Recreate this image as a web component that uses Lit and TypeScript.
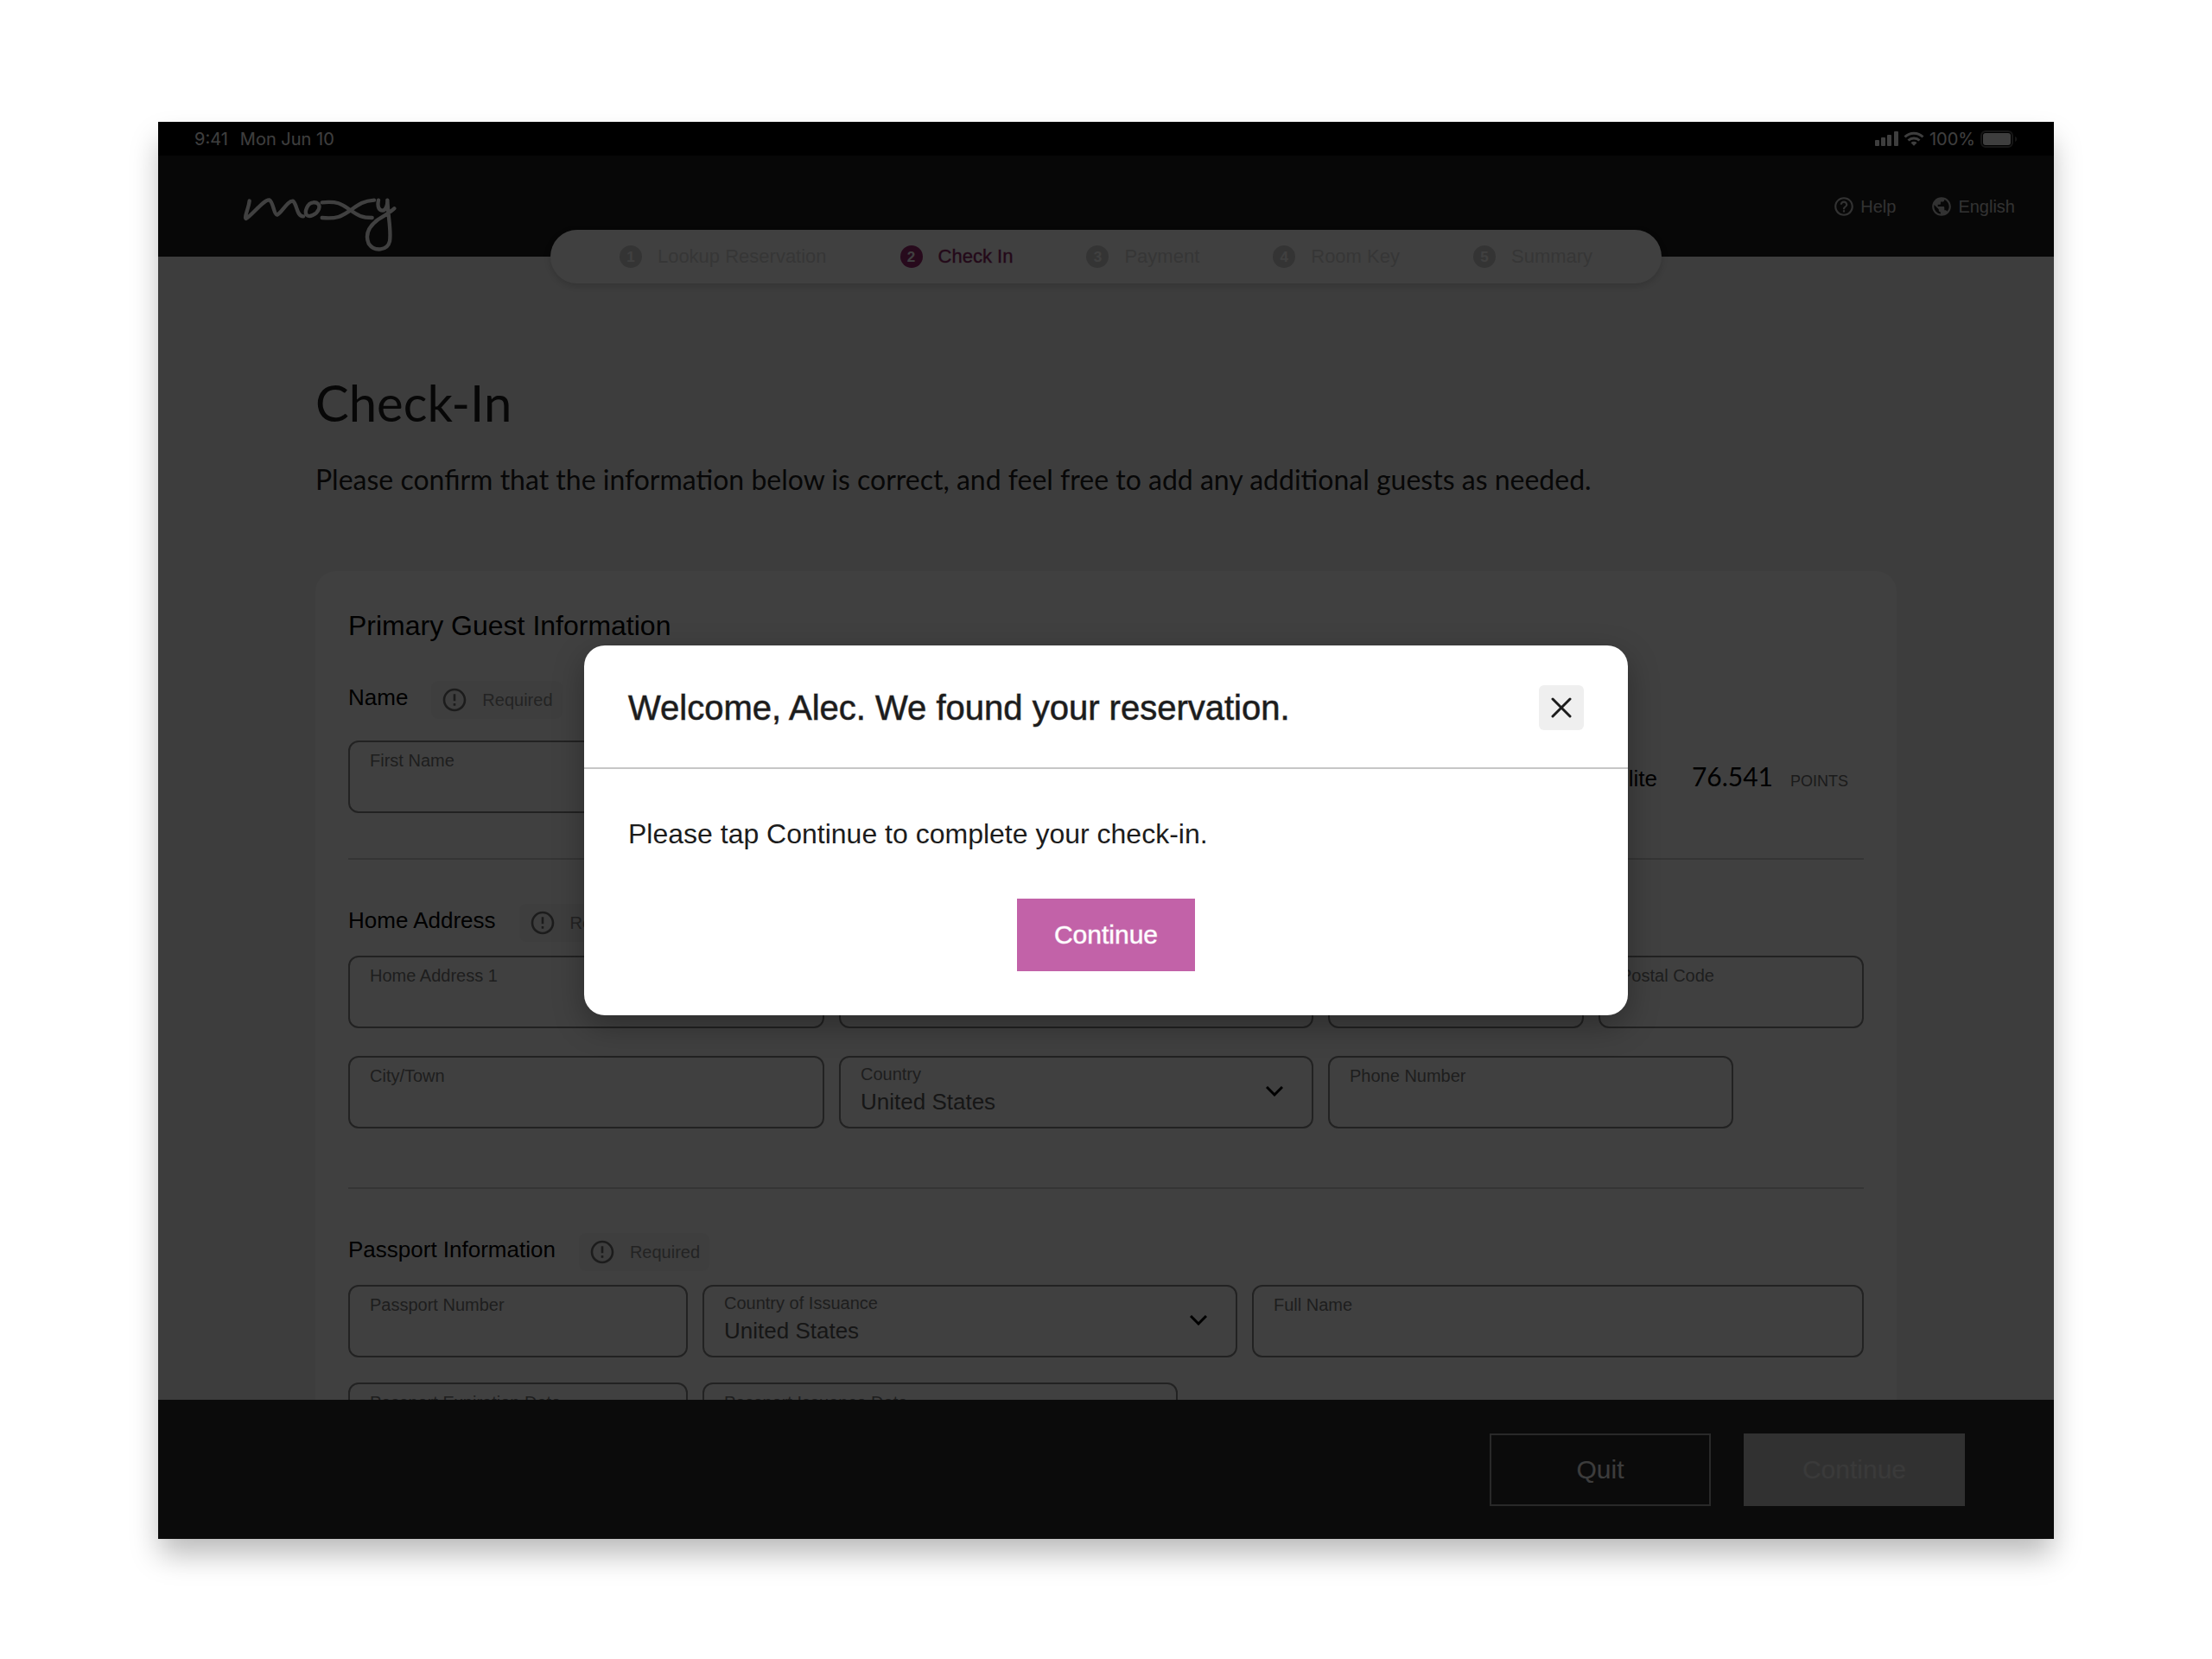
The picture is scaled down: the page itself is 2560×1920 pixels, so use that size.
import { LitElement, html, css, svg, nothing } from "lit";
import { customElement, property } from "lit/decorators.js";
import { classMap } from "lit/directives/class-map.js";

const CIRCLE_RING =
  "M12 2C6.48 2 2 6.48 2 12s4.48 10 10 10 10-4.48 10-10S17.52 2 12 2zm0 18c-4.41 0-8-3.59-8-8s3.59-8 8-8 8 3.59 8 8-3.59 8-8 8z";
const HELP = svg`<path d="${CIRCLE_RING}M11 16h2v2h-2zM12 6c-2.21 0-4 1.79-4 4h2c0-1.1.9-2 2-2s2 .9 2 2c0 2-3 1.75-3 5h2c0-2.25 3-2.5 3-5 0-2.21-1.79-4-4-4z"/>`;
const GLOBE = svg`<path d="M12 2C6.48 2 2 6.48 2 12s4.48 10 10 10 10-4.48 10-10S17.52 2 12 2zm-1 17.93c-3.95-.49-7-3.85-7-7.93 0-.62.08-1.21.21-1.79L9 15v1c0 1.1.9 2 2 2v1.93zm6.9-2.54c-.26-.81-1-1.39-1.9-1.39h-1v-3c0-.55-.45-1-1-1H8v-2h2c.55 0 1-.45 1-1V7h2c1.1 0 2-.9 2-2v-.41c2.93 1.19 5 4.06 5 7.41 0 2.08-.8 3.97-2.1 5.39z"/>`;

const STEPS = ["Lookup Reservation", "Check In", "Payment", "Room Key", "Summary"];
const ACTIVE_STEP = 1;

/** A bordered box with a small caption above an input or a drop-down. */
@customElement("form-field")
export class FormField extends LitElement {
  @property() label = "";
  @property() value = "";
  @property({ type: Boolean }) choice = false;

  static styles = css`
    :host {
      display: block;
      min-width: 0;
    }
    .box {
      box-sizing: border-box;
      display: grid;
      grid-template-columns: 1fr auto;
      grid-template-rows: 24px 40px;
      align-content: start;
      height: 84px;
      padding: 9px 33px 0 23px;
      border: 2px solid #868686;
      border-radius: 12px;
    }
    .box.choice {
      padding-top: 7px;
    }
    label {
      font-size: 20px;
      line-height: 24px;
      white-space: nowrap;
      color: #787878;
    }
    input,
    select {
      grid-column: 1;
      grid-row: 2;
      min-width: 0;
      width: 100%;
      height: 40px;
      margin: 0;
      padding: 0;
      border: 0;
      outline: 0;
      appearance: none;
      background: none;
      font: inherit;
      font-size: 26px;
      color: #5a5a5a;
    }
    svg {
      grid-column: 2;
      grid-row: 1 / 3;
      align-self: center;
    }
  `;

  render() {
    return html`<div class=${classMap({ box: true, choice: this.choice })}>
      <label for="control">${this.label}</label>
      ${this.choice
        ? html`<select id="control"><option>${this.value}</option></select>
            <svg width="20" height="12" viewBox="0 0 20 12" fill="none" stroke="#000" stroke-width="3" aria-hidden="true">
              <path d="M1 1l9 9 9-9" />
            </svg>`
        : html`<input id="control" type="text" .value=${this.value} />`}
    </div>`;
  }
}

@customElement("app-root")
export class AppRoot extends LitElement {
  static styles = css`
    :host {
      display: block;
      box-sizing: border-box;
      height: 100vh;
      padding: 141px 183px 139px;
      background: #fff;
      font-family: "Liberation Sans", Arial, sans-serif;
    }
    h1, h2, h3, p, ol {
      margin: 0;
      padding: 0;
      font-weight: 400;
    }
    button {
      font: inherit;
      cursor: pointer;
    }
    .device {
      position: relative;
      height: 100%;
      box-shadow: 0 20px 32px -2px rgba(0, 0, 0, 0.27);
    }
    .page {
      display: flex;
      flex-direction: column;
      height: 100%;
      background: #f2f2f2;
    }

    /* status bar */
    .status {
      display: flex;
      align-items: center;
      justify-content: space-between;
      height: 39px;
      padding: 0 42px;
      background: #000;
      color: #f8f8f8;
      font-family: Inter, sans-serif;
      font-size: 20px;
    }
    .status-group {
      display: flex;
      align-items: center;
      gap: 14px;
    }
    .status-group.right {
      gap: 6px;
    }

    /* brand bar */
    .brand {
      position: relative;
      display: flex;
      justify-content: space-between;
      align-items: flex-start;
      height: 117px;
      padding: 46px 45px 0 96px;
      box-sizing: border-box;
      background: #1c1c1c;
    }
    .links {
      display: flex;
      gap: 40px;
    }
    .links a {
      display: flex;
      align-items: center;
      gap: 6px;
      font-size: 20px;
      line-height: 24px;
      color: #c8c8c8;
      text-decoration: none;
    }
    .steps-bar {
      position: absolute;
      left: 0;
      right: 0;
      bottom: -31px;
      display: flex;
      justify-content: center;
    }
    .steps {
      display: flex;
      align-items: center;
      gap: 85px;
      height: 62px;
      padding: 0 80px;
      border-radius: 31px;
      background: #fff;
      box-shadow: 0 3px 8px rgba(0, 0, 0, 0.16);
      list-style: none;
    }
    .step {
      display: flex;
      align-items: center;
      gap: 18px;
      font-size: 22px;
      line-height: 28px;
      color: #d6d6d6;
    }
    .dot {
      display: grid;
      place-items: center;
      width: 26px;
      height: 26px;
      border-radius: 50%;
      background: #cecece;
      color: #fff;
      font-size: 17px;
      font-weight: 700;
    }
    .step.active {
      color: #8c2464;
      -webkit-text-stroke: 1px rgba(140, 36, 100, 0.4);
    }
    .active .dot {
      background: #9c2870;
      -webkit-text-stroke: 0;
    }

    /* content */
    .content {
      flex: 1;
      min-height: 0;
      overflow: hidden;
      padding: 133px 182px 0;
    }
    .title {
      font-family: Lato, sans-serif;
      font-size: 58px;
      line-height: 72px;
      color: #1c1c1c;
    }
    .lead {
      margin-top: 33px;
      font-family: Lato, sans-serif;
      font-size: 32px;
      line-height: 40px;
      color: #1c1c1c;
    }
    .card {
      margin-top: 86px;
      padding: 43px 38px;
      border-radius: 24px;
      background: #fefefe;
    }
    .card-title {
      font-size: 32px;
      line-height: 40px;
      margin-bottom: 44px;
    }
    .section-head {
      display: flex;
      align-items: center;
      gap: 27px;
      margin-bottom: 16px;
    }
    .section-head.roomy {
      margin-bottom: 25px;
    }
    .section-title {
      padding-bottom: 7px;
      font-size: 26px;
      line-height: 32px;
    }
    .badge {
      display: flex;
      align-items: center;
      gap: 16px;
      height: 44px;
      padding: 0 11px;
      border-radius: 8px;
      background: #f7f7f7;
      font-size: 20px;
      color: #8c8c8c;
    }
    .badge svg {
      fill: #707070;
    }
    .row {
      display: grid;
      gap: 17px;
      align-items: center;
    }
    .row + .row {
      margin-top: 32px;
    }
    .row.passport + .row {
      margin-top: 29px;
    }
    .names {
      grid-template-columns: 551fr 549fr 620fr;
    }
    .address {
      grid-template-columns: 551fr 549fr 296fr 307fr;
    }
    .city {
      grid-template-columns: 551fr 549fr 469fr 134fr;
    }
    .passport {
      grid-template-columns: 393fr 619fr 708fr;
    }
    .dates {
      grid-template-columns: 393fr 550fr 777fr;
    }
    .member {
      display: flex;
      justify-content: flex-end;
      align-items: baseline;
      padding: 0 18px 2px 0;
      white-space: nowrap;
    }
    .tier {
      font-size: 26px;
    }
    .points {
      margin: 0 20px 0 40px;
      font-family: Lato, sans-serif;
      font-size: 30px;
    }
    .unit {
      font-size: 18px;
      color: #6c6c6c;
    }
    .rule {
      height: 2px;
      margin: 52px 0 51px;
      border: 0;
      background: #d4d4d4;
    }
    .rule.far {
      margin-top: 68px;
    }

    /* footer */
    .footer {
      display: flex;
      align-items: center;
      justify-content: flex-end;
      gap: 38px;
      height: 161px;
      padding: 0 103px;
      background: #2c2c2c;
    }
    .action {
      width: 256px;
      height: 84px;
      padding: 0;
      border: 2px solid #a4a4a4;
      background: none;
      color: #f0f0f0;
      font-size: 30px;
    }
    .action.muted {
      border-color: #c4c4c4;
      background: #c4c4c4;
      color: #e6e6e6;
    }

    /* modal */
    .scrim {
      position: absolute;
      inset: 0;
      display: grid;
      place-items: center;
      background: rgba(0, 0, 0, 0.75);
    }
    .dialog {
      box-sizing: border-box;
      width: min(1208px, 92%);
      border-radius: 24px;
      background: #fff;
      color: #1c1c1c;
      box-shadow: 0 12px 36px rgba(0, 0, 0, 0.3);
    }
    .dialog-head {
      box-sizing: border-box;
      display: flex;
      align-items: center;
      justify-content: space-between;
      height: 143px;
      padding: 2px 51px 0;
      border-bottom: 2px solid #c6c6c6;
    }
    .dialog-title {
      font-size: 40px;
      line-height: 48px;
      -webkit-text-stroke: 1px rgba(28, 28, 28, 0.6);
    }
    .close {
      display: grid;
      place-items: center;
      width: 52px;
      height: 52px;
      padding: 0;
      border: 0;
      border-radius: 6px;
      background: #efefef;
    }
    .dialog-body {
      display: flex;
      flex-direction: column;
      gap: 55px;
      padding: 55px 51px 51px;
    }
    .dialog-text {
      font-size: 32px;
      line-height: 40px;
    }
    .primary {
      align-self: center;
      width: 206px;
      height: 84px;
      padding: 0;
      border: 0;
      background: #c262a8;
      color: #fff;
      font-size: 30px;
      -webkit-text-stroke: 1px rgba(255, 255, 255, 0.5);
    }
  `;

  private badge() {
    return html`<span class="badge">
      <svg width="32" height="32" viewBox="0 0 24 24" aria-hidden="true">
        <path d="${CIRCLE_RING}M11 15h2v2h-2zM11 7h2v6h-2z" />
      </svg>
      Required
    </span>`;
  }

  private sectionHead(text: string, roomy = false) {
    return html`<div class=${classMap({ "section-head": true, roomy })}>
      <h3 class="section-title">${text}</h3>
      ${this.badge()}
    </div>`;
  }

  private statusBar() {
    return html`<div class="status">
      <div class="status-group"><span>9:41</span><span>Mon Jun 10</span></div>
      <div class="status-group right">
        <svg width="27" height="17" viewBox="0 0 27 17" fill="#f8f8f8" aria-hidden="true">
          <rect x="0" y="10" width="5" height="7" rx="1" />
          <rect x="7" y="7" width="5" height="10" rx="1" />
          <rect x="14" y="4" width="5" height="13" rx="1" />
          <rect x="22" y="0" width="5" height="17" rx="1" />
        </svg>
        <svg width="24" height="17" viewBox="0 0 24 17" fill="none" stroke="#f8f8f8" stroke-width="3" aria-hidden="true">
          <path d="M1.500 6.500a15 15 0 0 1 21 0M5.500 10.500a9.500 9.500 0 0 1 13 0" />
          <path d="M8.500 13.200a5 5 0 0 1 7 0L12 16.800z" fill="#f8f8f8" stroke="none" />
        </svg>
        <span>100%</span>
        <svg width="43" height="20" viewBox="0 0 43 20" aria-hidden="true">
          <rect x="1" y="1" width="36" height="18" rx="5" fill="none" stroke="#585858" stroke-width="2" />
          <rect x="3" y="3" width="32" height="14" rx="3" fill="#f8f8f8" />
          <path d="M40 7c3 1 3 5 0 6z" fill="#585858" />
        </svg>
      </div>
    </div>`;
  }

  private brandBar() {
    return html`<header class="brand">
      <svg width="182" height="65" viewBox="360 318 546 195" fill="none" stroke="#fff" stroke-width="13" stroke-linecap="round" stroke-linejoin="round" role="img" aria-label="Moxy">
        <path d="M389 337C387 360 370 396 377 399C396 390 440 331 458 334C473 342 473 384 485 386C501 380 521 336 540 338C555 348 552 392 576 391" />
        <path d="M610 343C590 345 580 375 587 386C596 396 622 386 630 366C636 350 624 341 610 343z" />
        <path d="M641 343C705 337 715 354 740 370C765 388 780 396 815 396" />
        <path d="M641 396C700 402 715 386 740 370C768 350 785 337 822 335" />
        <path d="M837 335C832 360 840 371 851 371C864 370 869 350 868 335C871 400 882 440 876 478C868 512 822 514 803 486C788 450 806 424 836 402C860 386 878 378 892 364" />
      </svg>
      <nav class="links" aria-label="Utilities">
        <a href="#help">
          <svg width="26" height="26" viewBox="0 0 24 24" fill="#c8c8c8" aria-hidden="true">${HELP}</svg>
          Help
        </a>
        <a href="#language">
          <svg width="26" height="26" viewBox="0 0 24 24" fill="#c8c8c8" aria-hidden="true">${GLOBE}</svg>
          English
        </a>
      </nav>
      <div class="steps-bar">
        <ol class="steps">
          ${STEPS.map(
            (name, i) => html`<li
              class=${classMap({ step: true, active: i === ACTIVE_STEP })}
              aria-current=${i === ACTIVE_STEP ? "step" : nothing}
            >
              <span class="dot">${i + 1}</span>${name}
            </li>`
          )}
        </ol>
      </div>
    </header>`;
  }

  private form() {
    return html`<main class="content">
      <h1 class="title">Check-In</h1>
      <p class="lead">
        Please confirm that the information below is correct, and feel free to add any additional guests as needed.
      </p>
      <form class="card">
        <h2 class="card-title">Primary Guest Information</h2>
        ${this.sectionHead("Name", true)}
        <div class="row names">
          <form-field label="First Name"></form-field>
          <form-field label="Last Name"></form-field>
          <div class="member">
            <span class="tier">Elite</span>
            <span class="points">76.541</span>
            <span class="unit">POINTS</span>
          </div>
        </div>
        <hr class="rule" />
        ${this.sectionHead("Home Address")}
        <div class="row address">
          <form-field label="Home Address 1"></form-field>
          <form-field label="Home Address 2"></form-field>
          <form-field label="State"></form-field>
          <form-field label="Postal Code"></form-field>
        </div>
        <div class="row city">
          <form-field label="City/Town"></form-field>
          <form-field label="Country" value="United States" choice></form-field>
          <form-field label="Phone Number"></form-field>
        </div>
        <hr class="rule far" />
        ${this.sectionHead("Passport Information")}
        <div class="row passport">
          <form-field label="Passport Number"></form-field>
          <form-field label="Country of Issuance" value="United States" choice></form-field>
          <form-field label="Full Name"></form-field>
        </div>
        <div class="row dates">
          <form-field label="Passport Expiration Date"></form-field>
          <form-field label="Passport Issuance Date"></form-field>
        </div>
      </form>
    </main>`;
  }

  render() {
    return html`<div class="device">
      <div class="page" inert>
        ${this.statusBar()} ${this.brandBar()} ${this.form()}
        <footer class="footer">
          <button class="action" type="button">Quit</button>
          <button class="action muted" type="button">Continue</button>
        </footer>
      </div>
      <div class="scrim">
        <section class="dialog" role="dialog" aria-modal="true" aria-labelledby="dialog-title">
          <div class="dialog-head">
            <h2 class="dialog-title" id="dialog-title">Welcome, Alec. We found your reservation.</h2>
            <button class="close" type="button" aria-label="Close">
              <svg width="24" height="24" viewBox="0 0 24 24" fill="none" stroke="#1c1c1c" stroke-width="3" stroke-linecap="round" aria-hidden="true">
                <path d="M2 2l20 20M22 2L2 22" />
              </svg>
            </button>
          </div>
          <div class="dialog-body">
            <p class="dialog-text">Please tap Continue to complete your check-in.</p>
            <button class="primary" type="button">Continue</button>
          </div>
        </section>
      </div>
    </div>`;
  }
}
